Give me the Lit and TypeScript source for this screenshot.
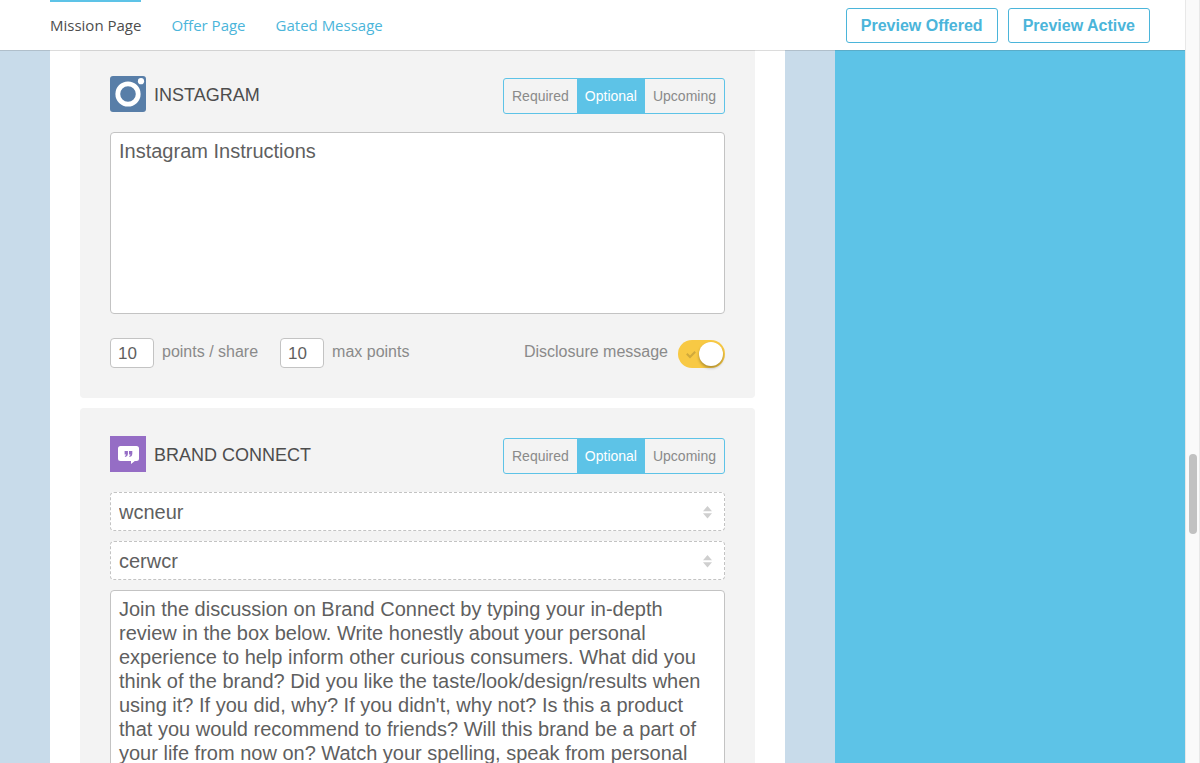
import { LitElement, html, css, svg } from "lit";
import { customElement, property, state } from "lit/decorators.js";
import { classMap } from "lit/directives/class-map.js";

const LEVELS = ["Required", "Optional", "Upcoming"];

const instagramIcon = html`<svg class="icon" width="36" height="36" viewBox="0 0 36 36" aria-hidden="true">
  <rect width="36" height="36" rx="3" fill="#587ea8" />
  <circle cx="18" cy="18" r="10.2" fill="none" stroke="#fff" stroke-width="4.8" />
  <circle cx="31" cy="5.2" r="3.1" fill="#fff" />
</svg>`;

const quoteMark = (x: number) => svg`<path
  transform="translate(${x} 15)"
  d="M0 0h3.300v3q0 2.400-2.600 3.100l-.6-1q1.300-.5 1.400-1.700H0z" fill="#956dc5" />`;

const brandIcon = html`<svg class="icon" width="36" height="36" viewBox="0 0 36 36" aria-hidden="true">
  <rect width="36" height="36" fill="#956dc5" />
  <path d="M10.500 10h16q2.500 0 2.500 2.500v10q0 2.500-2.500 2.500h-1.700L21 28v-3H10.500q-2.500 0-2.500-2.500v-10q0-2.500 2.500-2.500z" fill="#fff" />
  ${quoteMark(14.6)}${quoteMark(19)}
</svg>`;

@customElement("level-picker")
class LevelPicker extends LitElement {
  @property() name = "level";
  @state() value = "Optional";

  static styles = css`
    .group {
      display: flex;
      height: 36px;
      box-sizing: border-box;
      margin: 0;
      padding: 0;
      border: 1px solid #5dc3e7;
      border-radius: 3px;
      font-size: 14px;
      color: #8a8a8a;
    }
    .option {
      position: relative;
      display: flex;
      align-items: center;
      padding: 0 8px;
      cursor: pointer;
    }
    .option.on {
      background: #5dc3e7;
      color: #fff;
    }
    .radio {
      position: absolute;
      inset: 0;
      margin: 0;
      opacity: 0;
    }
  `;

  render() {
    return html`<div class="group" role="radiogroup" aria-label=${this.name}>
      ${LEVELS.map(
        (l) => html`<label class=${classMap({ option: true, on: l === this.value })}>
          <input class="radio" type="radio" name=${this.name} .checked=${l === this.value}
            @change=${() => (this.value = l)} />${l}</label>`
      )}
    </div>`;
  }
}

@customElement("app-root")
class AppRoot extends LitElement {
  static styles = css`
    :host {
      display: grid;
      grid-template-columns: minmax(0, 1fr) 15px;
      height: 100vh;
      overflow: hidden;
      font-family: "Liberation Sans", Arial, sans-serif;
      font-size: 16px;
      color: #5f5f5f;
    }
    .page {
      display: flex;
      flex-direction: column;
      min-height: 0;
    }
    .header {
      position: relative;
      z-index: 1;
      display: flex;
      flex: none;
      justify-content: space-between;
      align-items: center;
      height: 50px;
      padding: 0 35px 0 50px;
      background: #fff;
      box-shadow: 0 1px 0 rgba(80, 80, 80, 0.2);
    }
    .tabs {
      display: flex;
      align-self: stretch;
      gap: 30px;
      font-family: "Open Sans", sans-serif;
      font-size: 15px;
    }
    .tab {
      box-sizing: border-box;
      height: 50px;
      line-height: 46px;
      border-top: 2px solid transparent;
      color: #4bb5da;
      text-decoration: none;
    }
    .tab.current {
      border-color: #5dc3e7;
      color: #4d4d4d;
    }
    .actions {
      display: flex;
      gap: 10px;
    }
    .action {
      height: 35px;
      padding: 2px 14px 0;
      border: 1px solid #4bb5da;
      border-radius: 3px;
      background: #fff;
      color: #4bb5da;
      font: bold 16px "Liberation Sans", Arial, sans-serif;
    }
    .body {
      display: grid;
      grid-template-columns: minmax(0, 1fr) 350px;
      flex: 1;
      min-height: 0;
      overflow: hidden;
    }
    .canvas {
      padding: 0 50px;
      background: #c8dbea;
    }
    .sheet {
      display: flex;
      flex-direction: column;
      gap: 10px;
      padding: 0 30px;
      background: #fff;
    }
    .preview {
      background: #5dc3e7;
    }
    .panel {
      padding: 28px 30px 30px;
      border-radius: 4px;
      background: #f3f3f3;
    }
    .panel.cut {
      padding-top: 26px;
      border-radius: 0 0 4px 4px;
    }
    .head {
      display: flex;
      align-items: flex-start;
      height: 38px;
      margin-bottom: 18px;
    }
    .icon {
      display: block;
      flex: none;
    }
    .title {
      flex: 1;
      margin: 0 0 0 8px;
      font-size: 18px;
      font-weight: normal;
      line-height: 38px;
      color: #4d4d4d;
    }
    .picker {
      align-self: flex-end;
    }
    .text {
      display: block;
      box-sizing: border-box;
      width: 100%;
      height: 182px;
      padding: 6px 8px;
      border: 1px solid #c3c3c3;
      border-radius: 4px;
      background: #fff;
      color: #5f5f5f;
      font: 20px/24px "Liberation Sans", Arial, sans-serif;
      resize: none;
      overflow: hidden;
      outline: none;
    }
    .text.long {
      height: 300px;
    }
    .foot {
      display: flex;
      align-items: center;
      height: 30px;
      margin-top: 24px;
      color: #8a8a8a;
    }
    .caption {
      margin: 0 22px 0 8px;
      padding-bottom: 3px;
    }
    .caption.end {
      margin: 0 10px 0 auto;
    }
    .number {
      box-sizing: border-box;
      width: 44px;
      height: 30px;
      padding: 2px 7px 0;
      border: 1px solid #c3c3c3;
      border-radius: 4px;
      background: #fff;
      color: #5f5f5f;
      font: 17px "Liberation Sans", Arial, sans-serif;
    }
    .switch {
      position: relative;
      align-self: flex-end;
      width: 47px;
      height: 28px;
    }
    .check {
      position: absolute;
      inset: 0;
      width: 100%;
      height: 100%;
      margin: 0;
      appearance: none;
      border-radius: 14px;
      background: #f8c944;
    }
    .tick {
      position: absolute;
      left: 8px;
      top: 10px;
      pointer-events: none;
    }
    .knob {
      position: absolute;
      right: 2px;
      top: 2px;
      width: 24px;
      height: 24px;
      border-radius: 50%;
      background: #fff;
      box-shadow: 0 2px 3px rgba(0, 0, 0, 0.3);
      pointer-events: none;
    }
    .pick {
      position: relative;
      margin-bottom: 10px;
    }
    .select {
      display: block;
      box-sizing: border-box;
      width: 100%;
      height: 39px;
      padding: 0 8px;
      appearance: none;
      border: 1px dashed #c3c3c3;
      border-radius: 4px;
      background: #fff;
      color: #5f5f5f;
      font: 20px "Liberation Sans", Arial, sans-serif;
    }
    .arrows {
      position: absolute;
      right: 13px;
      top: 14px;
      pointer-events: none;
    }
    .track {
      box-sizing: border-box;
      display: grid;
      grid-template-rows: 454fr 80fr 229fr;
      padding: 0 2px 0 3px;
      border: solid #e8e8e8;
      border-width: 0 1px;
      background: #fafafa;
    }
    .thumb {
      grid-row: 2;
      width: 8px;
      border-radius: 4px;
      background: #c1c1c1;
    }
  `;

  private select(value: string, label: string) {
    return html`<div class="pick">
      <select class="select" aria-label=${label}><option>${value}</option></select>
      <svg class="arrows" width="9" height="13" viewBox="0 0 9 13" aria-hidden="true">
        <path d="M0 5.200 4.500 0 9 5.200zM0 7.200h9L4.500 12.400z" fill="#cfcfcf" />
      </svg>
    </div>`;
  }

  render() {
    return html`
      <div class="page">
        <header class="header">
          <nav class="tabs">
            <a class="tab current" href="#mission">Mission Page</a>
            <a class="tab" href="#offer">Offer Page</a>
            <a class="tab" href="#gated">Gated Message</a>
          </nav>
          <div class="actions">
            <button class="action">Preview Offered</button>
            <button class="action">Preview Active</button>
          </div>
        </header>
        <div class="body">
          <main class="canvas">
            <div class="sheet">
              <section class="panel cut">
                <div class="head">
                  ${instagramIcon}
                  <h2 class="title">INSTAGRAM</h2>
                  <level-picker class="picker" name="instagram"></level-picker>
                </div>
                <textarea class="text" aria-label="Instagram" .value=${"Instagram Instructions"}></textarea>
                <div class="foot">
                  <input class="number" id="share" type="text" inputmode="numeric" value="10" />
                  <label class="caption" for="share">points / share</label>
                  <input class="number" id="max" type="text" inputmode="numeric" value="10" />
                  <label class="caption" for="max">max points</label>
                  <label class="caption end" for="disclosure">Disclosure message</label>
                  <span class="switch">
                    <input class="check" id="disclosure" type="checkbox" checked />
                    <svg class="tick" width="10" height="9" viewBox="0 0 10 9" aria-hidden="true">
                      <path d="M.8 3.800 4 7 9.200 1.800" fill="none" stroke="#d0a93c" stroke-width="2" />
                    </svg>
                    <span class="knob"></span>
                  </span>
                </div>
              </section>
              <section class="panel">
                <div class="head">
                  ${brandIcon}
                  <h2 class="title">BRAND CONNECT</h2>
                  <level-picker class="picker" name="brand"></level-picker>
                </div>
                ${this.select("wcneur", "Brand")} ${this.select("cerwcr", "Topic")}
                <textarea class="text long" aria-label="Brand Connect" .value=${"Join the discussion on Brand Connect by typing your in-depth review in the box below. Write honestly about your personal experience to help inform other curious consumers. What did you think of the brand? Did you like the taste/look/design/results when using it? If you did, why? If you didn't, why not? Is this a product that you would recommend to friends? Will this brand be a part of your life from now on? Watch your spelling, speak from personal"}></textarea>
              </section>
            </div>
          </main>
          <aside class="preview"></aside>
        </div>
      </div>
      <div class="track"><div class="thumb"></div></div>
    `;
  }
}
